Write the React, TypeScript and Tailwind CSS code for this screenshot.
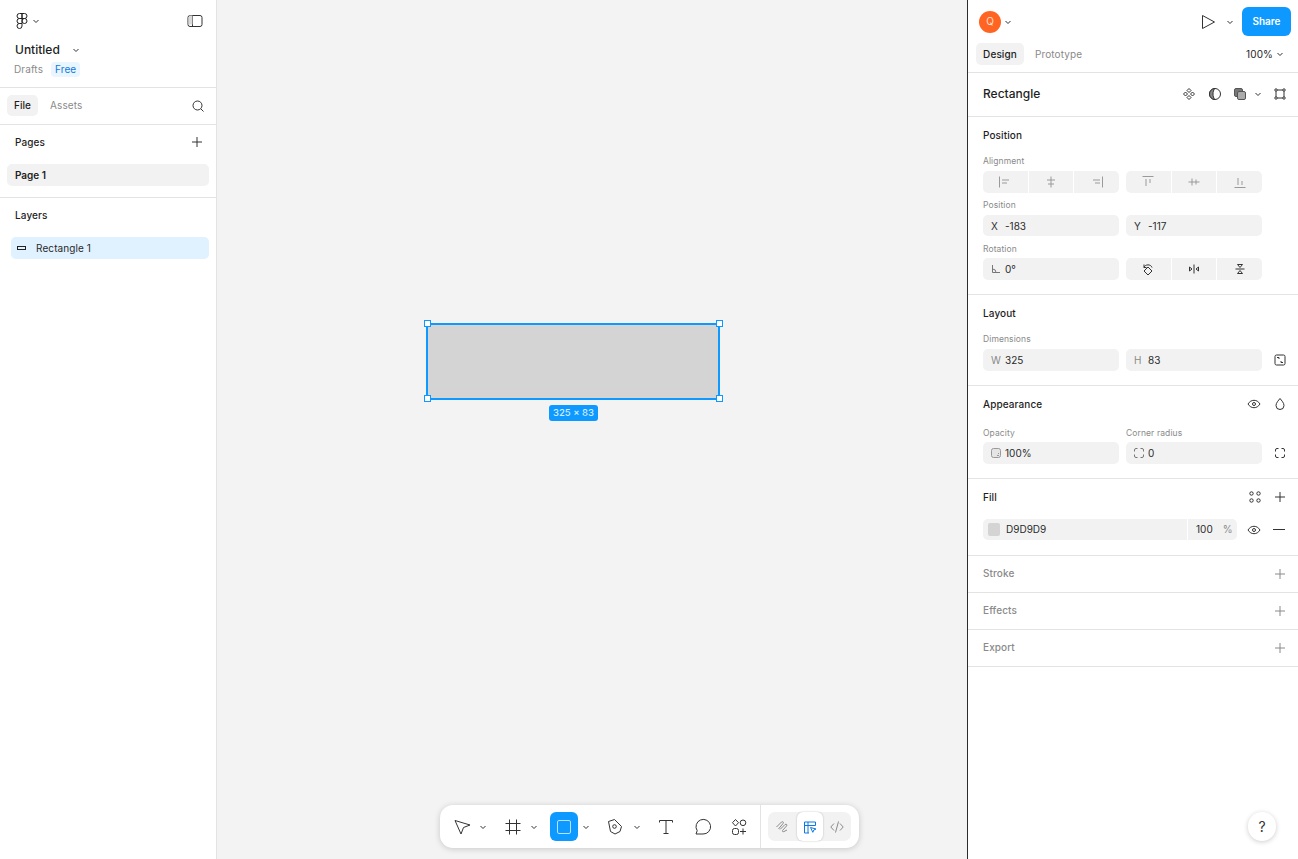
import type { ReactNode } from "react";

function Chevron({ className = "" }: { className?: string }) {
  return (
    <svg width="8" height="8" viewBox="0 0 8 8" fill="none" className={className}>
      <path d="M1.5 3l2.5 2.5L6.5 3" stroke="#333" strokeWidth="1" />
    </svg>
  );
}

function Ico({ size = 16, children, stroke = "#333", className = "" }: { size?: number; children: ReactNode; stroke?: string; className?: string }) {
  return (
    <svg width={size} height={size} viewBox={`0 0 ${size} ${size}`} fill="none" stroke={stroke} strokeWidth="1" className={`shrink-0 ${className}`}>
      {children}
    </svg>
  );
}

function Plus({ stroke = "#333" }: { stroke?: string }) {
  return (
    <Ico size={12} stroke={stroke}>
      <path d="M6 1v10M1 6h10" />
    </Ico>
  );
}

function Eye({ className = "" }: { className?: string }) {
  return (
    <Ico size={14} className={className}>
      <path d="M1 7c1.600-2.500 3.600-3.700 6-3.700s4.400 1.200 6 3.700c-1.600 2.500-3.600 3.700-6 3.700S2.600 9.500 1 7z" />
      <circle cx="7" cy="7" r="1.500" />
    </Ico>
  );
}

function SectionHead({ title, children }: { title: string; children?: ReactNode }) {
  return (
    <div className="flex h-[20px] items-center justify-between pl-[15px] pr-[12px]">
      <span className="text-[10px] font-medium tracking-[0.1px] text-[#1e1e1e]">{title}</span>
      {children && <div className="flex items-center gap-[13px]">{children}</div>}
    </div>
  );
}

function FieldLabel({ children, className = "" }: { children: ReactNode; className?: string }) {
  return <div className={`h-[12px] text-[8.500px] leading-[12px] tracking-[0.1px] text-[#8a8a8a] ${className}`}>{children}</div>;
}

function Field({ label, value, dim, icon, className = "h-[22px]" }: { label?: string; value: string; dim?: boolean; icon?: ReactNode; className?: string }) {
  return (
    <div className={`flex w-[136px] shrink-0 items-center rounded-[5px] bg-[#f2f2f2] pl-[8px] text-[10px] text-[#2a2a2a] ${className}`}>
      <span className={`flex w-[14px] justify-start text-[10px] ${dim ? "text-[#8a8a8a]" : "text-[#333]"}`}>{label}{icon}</span>
      <span>{value}</span>
    </div>
  );
}

function SegGroup({ items }: { items: ReactNode[] }) {
  return (
    <div className="flex h-[22px] w-[136px] shrink-0 gap-[1px] overflow-hidden rounded-[5px]">
      {items.map((it, i) => (
        <div key={i} className="flex flex-1 items-center justify-center bg-[#f2f2f2]">{it}</div>
      ))}
    </div>
  );
}

const g = "#9a9a9a";

function LeftPanel() {
  return (
    <aside className="flex w-[217px] shrink-0 flex-col border-r border-[#e3e3e3] bg-white">
      <div className="h-[88px] border-b border-[#e3e3e3]">
        <div className="flex h-[42px] items-center justify-between pl-[16px] pr-[13px]">
          <div className="flex items-center gap-[4px]">
            <svg width="12" height="16" viewBox="0 0 12 16" fill="none" stroke="#222" strokeWidth="1">
              <path d="M6 .5H3.500a2.500 2.500 0 000 5H6zM6 .5h2.500a2.500 2.500 0 010 5H6zM6 5.500H3.500a2.500 2.500 0 000 5H6zM6 8a2.500 2.500 0 105 0 2.500 2.500 0 00-5 0zM3.500 10.500H6V13a2.500 2.500 0 11-2.500-2.500z" />
            </svg>
            <Chevron />
          </div>
          <Ico size={16} stroke="#333">
            <rect x="1" y="2.500" width="14" height="11" rx="2" />
            <path d="M5.500 2.500v11" />
            <path d="M1.500 4.500v7h4v-9h-3z" fill="#d9d9d9" stroke="none" />
          </Ico>
        </div>
        <div className="flex h-[16px] items-center pl-[15px]">
          <span className="text-[12px] font-medium text-[#1e1e1e]">Untitled</span>
          <Chevron className="ml-[12px]" />
        </div>
        <div className="mt-[2px] flex h-[18px] items-center pl-[14px] text-[10px] tracking-[0.1px]">
          <span className="text-[#8a8a8a]">Drafts</span>
          <span className="ml-[8px] rounded-[4px] bg-[#e9f5ff] px-[4px] leading-[15px] text-[#0d79e0]">Free</span>
        </div>
      </div>
      <div className="flex h-[37px] items-center border-b border-[#e3e3e3] pb-[1px] pl-[7px] pr-[11px] text-[10px] tracking-[0.1px]">
        <span className="flex h-[21px] w-[31px] items-center justify-center rounded-[5px] bg-[#f2f2f2] font-medium text-[#1e1e1e]">File</span>
        <span className="ml-[12px] text-[#8a8a8a]">Assets</span>
        <Ico size={14} stroke="#333" className="ml-auto">
          <circle cx="6.500" cy="6.500" r="4.500" />
          <path d="M10 10l2.500 2.500" />
        </Ico>
      </div>
      <div className="h-[73px] border-b border-[#e3e3e3] pt-[7px]">
        <div className="flex h-[20px] items-center justify-between pl-[15px] pr-[13px]">
          <span className="text-[10px] font-medium tracking-[0.1px] text-[#1e1e1e]">Pages</span>
          <Plus />
        </div>
        <div className="mx-[7px] mt-[12px] flex h-[22px] items-center rounded-[5px] bg-[#f2f2f2] pl-[8px] text-[10px] font-semibold text-[#1e1e1e]">Page 1</div>
      </div>
      <div className="flex h-[36px] items-end pb-[11px] pl-[15px]">
        <span className="text-[10px] font-medium tracking-[0.1px] text-[#1e1e1e]">Layers</span>
      </div>
      <div className="ml-[11px] mr-[7px] mt-[3px] flex h-[22px] items-center rounded-[5px] bg-[#e0f1ff] pl-[6px] text-[10px] tracking-[0.1px] text-[#2a2a2a]">
        <span className="box-border h-[4px] w-[9px] border border-[#222]" />
        <span className="ml-[10px]">Rectangle 1</span>
      </div>
    </aside>
  );
}

function Toolbar() {
  return (
    <div className="absolute bottom-[11px] left-[223px] flex h-[43px] w-[419px] items-center rounded-[13px] bg-white pl-[12px] shadow-[0_1px_6px_rgba(0,0,0,0.18)]">
      <Ico size={20} stroke="#333">
        <path d="M3 3.500l15 4.500-6.500 2.500-2.500 6.500z" strokeLinejoin="round" />
      </Ico>
      <Chevron className="ml-[7px]" />
      <Ico size={20} stroke="#333" className="ml-[16px]">
        <path d="M6.500 2.500v15M13.500 2.500v15M2.500 6.500h15M2.500 13.500h15" />
      </Ico>
      <Chevron className="ml-[7px]" />
      <div className="ml-[12px] flex h-[29px] w-[28px] items-center justify-center rounded-[6px] bg-[#0d99ff]">
        <span className="box-border h-[14px] w-[14px] rounded-[2px] border border-[#b9e2ff]" />
      </div>
      <Chevron className="ml-[4px]" />
      <Ico size={20} stroke="#333" className="ml-[15px]">
        <path d="M3.500 4.500L9.500 2.500 16.500 9.500 15 14.500 10 17 5.500 14.500z" strokeLinejoin="round" />
        <circle cx="9.500" cy="9.500" r="1.800" />
      </Ico>
      <Chevron className="ml-[8px]" />
      <Ico size={20} stroke="#333" className="ml-[15px]">
        <path d="M3.500 5.500V3.500h13v2M10 3.500v13M7.500 16.500h5" />
      </Ico>
      <Ico size={20} stroke="#333" className="ml-[17px]">
        <path d="M3 17l1.200-3.300A7.300 7.300 0 1110 17z" strokeLinejoin="round" />
      </Ico>
      <Ico size={20} stroke="#333" className="ml-[16px]">
        <path d="M6.500 2.500l3 3.200-3 3.300-3-3.300z" />
        <circle cx="14" cy="5.800" r="2.800" />
        <rect x="3.500" y="11.500" width="6" height="6" rx="2" />
        <path d="M14 11.500v6M11 14.500h6" />
      </Ico>
      <div className="ml-[11px] flex h-full items-center border-l border-[#e3e3e3] pl-[7px]">
        <div className="flex h-[29px] w-[83px] items-center justify-between rounded-[7px] bg-[#f2f2f2]">
          <div className="flex w-[28px] justify-center">
            <Ico size={14} stroke="#8a8a8a">
              <path d="M1.500 7L6.500 2c1.500-1 2.500.5 1.500 1.500L3.500 9M5 9.500l5-5c1.500-1 2.500.5 1.500 1.500l-4 4.500c-.5 1 .5 1.500 1.500 1l3-1.500" />
            </Ico>
          </div>
          <div className="flex h-[29px] w-[26px] items-center justify-center rounded-[6px] bg-white shadow-[0_0_2px_rgba(0,0,0,0.25)]">
            <Ico size={14} stroke="#0d79e0">
              <path d="M1.500 5.500h11V2H1.500v11H6M5 2v11" />
              <path d="M7.500 7.500l5.500 1.500-2.200 1-1 2.300z" strokeLinejoin="round" />
            </Ico>
          </div>
          <div className="flex w-[28px] justify-center">
            <Ico size={14} stroke="#8a8a8a">
              <path d="M4 3.500L.8 7 4 10.500M10 3.500L13.200 7 10 10.500M8.500 1.500l-3 11" />
            </Ico>
          </div>
        </div>
      </div>
    </div>
  );
}

function Canvas() {
  return (
    <main className="relative flex-1 bg-[#f3f3f3]">
      <div className="absolute left-[209px] top-[323px] box-border h-[77px] w-[294px] border-2 border-[#0d99ff] bg-[#d4d4d4]" />
      {[
        "left-[207px] top-[320px]",
        "left-[499px] top-[320px]",
        "left-[207px] top-[395px]",
        "left-[499px] top-[395px]",
      ].map((pos) => (
        <span key={pos} className={`absolute box-border h-[7px] w-[7px] border border-[#0d99ff] bg-white ${pos}`} />
      ))}
      <div className="absolute left-[332px] top-[405px] flex h-[16px] w-[49px] items-center justify-center rounded-[3px] bg-[#0d99ff] text-[9.500px] font-medium text-[#cfeaff]">325 × 83</div>
      <Toolbar />
    </main>
  );
}

function RightPanel() {
  return (
    <aside className="relative flex w-[331px] shrink-0 flex-col border-l border-[#2c2c2c] bg-white">
      <div className="h-[73px] border-b border-[#e3e3e3]">
        <div className="flex h-[43px] items-center pl-[11px] pr-[7px]">
          <span className="flex h-[22px] w-[22px] items-center justify-center rounded-full bg-[#ff6422] text-[10px] text-[#ffe1d3]">Q</span>
          <Chevron className="ml-[3px]" />
          <Ico size={16} stroke="#333" className="ml-auto">
            <path d="M2.500 1.500L14.500 8 2.500 14.500z" strokeLinejoin="round" />
          </Ico>
          <Chevron className="ml-[10px]" />
          <span className="ml-[8px] flex h-[29px] w-[49px] items-center justify-center rounded-[6px] bg-[#0d99ff] text-[10px] font-semibold text-white">Share</span>
        </div>
        <div className="flex h-[22px] items-center pl-[8px] pr-[14px] text-[10px] tracking-[0.1px]">
          <span className="flex h-[22px] w-[48px] items-center justify-center rounded-[5px] bg-[#f2f2f2] font-medium text-[#1e1e1e]">Design</span>
          <span className="ml-[11px] text-[#8a8a8a]">Prototype</span>
          <span className="ml-auto text-[#1e1e1e]">100%</span>
          <Chevron className="ml-[3px]" />
        </div>
      </div>

      <div className="flex h-[44px] items-center border-b border-[#e3e3e3] pb-[1px] pl-[15px] pr-[11px]">
        <span className="text-[12px] font-medium text-[#1e1e1e]">Rectangle</span>
        <Ico size={14} className="ml-auto">
          <path d="M7 1.500L9 3.500 7 5.500 5 3.500zM7 8.500L9 10.500 7 12.500 5 10.500zM3.500 5L5.500 7 3.500 9 1.500 7zM10.500 5L12.500 7 10.500 9 8.500 7z" />
        </Ico>
        <Ico size={14} className="ml-[12px]">
          <circle cx="7" cy="7" r="5.500" />
          <path d="M7 1.500a5.500 5.500 0 000 11c-1.500-1.200-2-3.500-2-5.500s.5-4.300 2-5.500z" fill="#888" />
        </Ico>
        <Ico size={14} className="ml-[11px]">
          <rect x="1.500" y="1.500" width="8" height="8" rx="1.500" fill="#777" stroke="#555" />
          <rect x="4.500" y="4.500" width="8" height="8" rx="1.500" fill="#aaa" stroke="#555" />
        </Ico>
        <Chevron className="ml-[7px]" />
        <Ico size={14} className="ml-[11px]">
          <path d="M3.500 3h7M3.500 11h7M3 3.500v7M11 3.500v7" />
          <circle cx="3" cy="3" r="1.200" fill="#fff" />
          <circle cx="11" cy="3" r="1.200" fill="#fff" />
          <circle cx="3" cy="11" r="1.200" fill="#fff" />
          <circle cx="11" cy="11" r="1.200" fill="#fff" />
        </Ico>
      </div>

      <section className="h-[178px] border-b border-[#e3e3e3] pt-[8px]">
        <SectionHead title="Position" />
        <div className="pl-[15px]">
          <FieldLabel className="mt-[10px]">Alignment</FieldLabel>
          <div className="mt-[4px] flex gap-[7px]">
            <SegGroup items={[
              <Ico size={14} stroke={g}><path d="M1.500 1.500v11M4 5h7M4 8h5" /></Ico>,
              <Ico size={14} stroke={g}><path d="M7 1.500v11M3 5h8M4 9h6" /></Ico>,
              <Ico size={14} stroke={g}><path d="M12.500 1.500v11M3 5h7M5 8h5" /></Ico>,
            ]} />
            <SegGroup items={[
              <Ico size={14} stroke={g}><path d="M1.500 1.500h11M5 4v7M9 4v4" /></Ico>,
              <Ico size={14} stroke={g}><path d="M1.500 7h11M5 3.500v7M9 4.500v5" /></Ico>,
              <Ico size={14} stroke={g}><path d="M1.500 12.500h11M5 3v7M9 6v4" /></Ico>,
            ]} />
          </div>
          <FieldLabel className="mt-[6px]">Position</FieldLabel>
          <div className="mt-[4px] flex gap-[7px]">
            <Field label="X" value="-183" className="h-[21px] pt-[1px]" />
            <Field label="Y" value="-117" className="h-[21px] pt-[1px]" />
          </div>
          <FieldLabel className="mt-[7px]">Rotation</FieldLabel>
          <div className="mt-[3px] flex gap-[7px]">
            <Field value="0°" icon={
              <Ico size={10} stroke="#777"><path d="M1.500 1v7.500H9M1.500 5a3.500 3.500 0 013.500 3.500" /></Ico>
            } />
            <SegGroup items={[
              <Ico size={14}><path d="M7 5l4 4-4 4-4-4zM3 5.500C4 2 10 2 11 5.500M3 2.500v3h2.500" /></Ico>,
              <Ico size={14}><path d="M7 2.500v9M2.500 5L5 7 2.500 9zM11.500 5L9 7l2.500 2z" /></Ico>,
              <Ico size={14}><path d="M2.500 7h9M4.500 2.500h5L7 5.500zM4.500 11.500h5L7 8.500z" /></Ico>,
            ]} />
          </div>
        </div>
      </section>

      <section className="h-[91px] border-b border-[#e3e3e3] pt-[8px]">
        <SectionHead title="Layout" />
        <div className="pl-[15px]">
          <FieldLabel className="mt-[10px]">Dimensions</FieldLabel>
          <div className="mt-[4px] flex items-center gap-[7px]">
            <Field label="W" value="325" dim />
            <Field label="H" value="83" dim />
            <Ico size={12} className="ml-[5px]">
              <rect x="1" y="1" width="10" height="10" rx="1.500" />
              <path d="M3 3.500h2v1.500M9 8.500H7V7" />
            </Ico>
          </div>
        </div>
      </section>

      <section className="h-[93px] border-b border-[#e3e3e3] pt-[8px]">
        <SectionHead title="Appearance">
          <Eye />
          <Ico size={12}>
            <path d="M6 .5C4.500 2.500 2 4.800 2 7.500a4 4 0 008 0C10 4.800 7.500 2.500 6 .5z" />
          </Ico>
        </SectionHead>
        <div className="pl-[15px]">
          <div className="mt-[13px] flex gap-[7px]">
            <FieldLabel className="w-[136px]">Opacity</FieldLabel>
            <FieldLabel>Corner radius</FieldLabel>
          </div>
          <div className="mt-[3px] flex items-center gap-[7px]">
            <Field value="100%" icon={
              <Ico size={12} stroke="#999" className="-ml-[1px]"><rect x="1.500" y="1.500" width="9" height="9" rx="2" fill="#e5e5e5" /><path d="M7 8.500h2M8 6.500h1" /></Ico>
            } />
            <Field value="0" icon={
              <Ico size={12} stroke="#777" className="-ml-[1px]"><path d="M1.500 4.500V3a1.500 1.500 0 011.500-1.500h1.500M7.500 1.500H9A1.500 1.500 0 0110.500 3v1.500M1.500 7.500V9A1.500 1.500 0 003 10.500h1.500M10.500 7.500V9A1.500 1.500 0 019 10.500H7.500" /></Ico>
            } />
            <Ico size={12} className="ml-[5px]">
              <path d="M1.500 4.500V3a1.500 1.500 0 011.500-1.500h1.500M7.500 1.500H9A1.500 1.500 0 0110.500 3v1.500M1.500 7.500V9A1.500 1.500 0 003 10.500h1.500M10.500 7.500V9A1.500 1.500 0 019 10.500H7.500" />
            </Ico>
          </div>
        </div>
      </section>

      <section className="h-[77px] border-b border-[#e3e3e3] pt-[8px]">
        <SectionHead title="Fill">
          <Ico size={12}>
            <circle cx="2.500" cy="2.500" r="1.700" />
            <circle cx="9.500" cy="2.500" r="1.700" />
            <circle cx="2.500" cy="9.500" r="1.700" />
            <circle cx="9.500" cy="9.500" r="1.700" />
          </Ico>
          <Plus />
        </SectionHead>
        <div className="mt-[12px] flex items-center pl-[15px] pr-[13px]">
          <div className="flex h-[21px] w-[254px] shrink-0 items-center rounded-[5px] bg-[#f2f2f2] text-[10px] text-[#2a2a2a]">
            <span className="ml-[5px] h-[13px] w-[12px] rounded-[2px] bg-[#d4d4d4]" />
            <span className="ml-[6px]">D9D9D9</span>
            <span className="ml-auto flex h-full w-[50px] items-center border-l border-white pl-[8px]">100<span className="ml-[10px] text-[#8a8a8a]">%</span></span>
          </div>
          <Eye className="ml-[10px]" />
          <span className="ml-auto h-[1px] w-[12px] bg-[#333]" />
        </div>
      </section>

      {["Stroke", "Effects", "Export"].map((t) => (
        <div key={t} className="flex h-[37px] items-center justify-between border-b border-[#e3e3e3] pb-[1px] pl-[15px] pr-[12px]">
          <span className="text-[10px] font-medium tracking-[0.1px] text-[#8a8a8a]">{t}</span>
          <Plus stroke="#8a8a8a" />
        </div>
      ))}

      <button className="absolute bottom-[18px] right-[22px] flex h-[29px] w-[28px] items-center justify-center rounded-full bg-white text-[14px] text-[#333] shadow-[0_1px_5px_rgba(0,0,0,0.2)]">?</button>
    </aside>
  );
}

export default function App() {
  return (
    <div className="flex h-[859px] w-[1298px] overflow-hidden bg-white font-['Inter',sans-serif] antialiased">
      <LeftPanel />
      <Canvas />
      <RightPanel />
    </div>
  );
}
